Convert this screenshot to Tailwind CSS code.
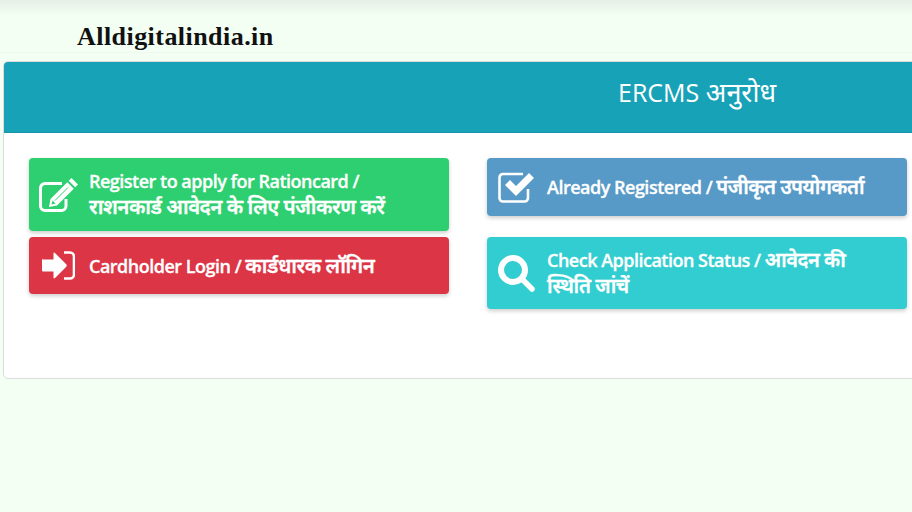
<!DOCTYPE html>
<html lang="hi">
<head>
    <meta charset="UTF-8">
    <title>ERCMS अनुरोध | Alldigitalindia.in</title>
    <script src="https://cdn.jsdelivr.net/npm/@tailwindcss/browser@4"></script>
</head>
<body class="bg-[#f3fff3] h-[512px] overflow-hidden font-['Open_Sans','Noto_Sans',sans-serif]">

    <!-- Top bar -->
    <header class="h-[53px] pl-[77px] pt-[22px] bg-gradient-to-b from-[#e6efe6] from-0% to-[#f3fff3] to-[30%] border-b border-[#eef8ee]">
        <h1 class="font-['Liberation_Serif',serif] font-bold text-[26px] leading-[30px] tracking-[0.45px] text-[#111]">Alldigitalindia.in</h1>
    </header>

    <!-- Card -->
    <section class="ml-[3px] mt-[8px] w-[1388px] h-[318px] bg-white border border-[#dcdcdc] rounded-[5px] overflow-hidden">
        <div class="h-[71px] bg-[#17a2b8] border-b border-[#1593a7] flex items-center justify-center">
            <h2 class="text-white text-[25px] leading-none -mt-[11px]">ERCMS <span class="text-[27px]">अनुरोध</span></h2>
        </div>

        <div class="pl-[25px] pt-[25px] flex gap-[38px]">
            <!-- Left column -->
            <div class="w-[420px] flex flex-col gap-[6px]">
                <a class="h-[73px] flex items-center gap-[10px] pl-[10px] rounded-[4px] bg-[#2ecf70] shadow-[0_2px_4px_rgba(0,0,0,0.2)] text-white font-semibold text-[18px] leading-[25px] tracking-[-0.5px] [-webkit-text-stroke:0.3px_white]">
                    <svg class="w-10 h-9 shrink-0" viewBox="0 0 40 36" fill="none">
                        <path d="M27 22v7a4.500 4.500 0 0 1-4.500 4.500H6A4.500 4.500 0 0 1 1.500 29V11A4.500 4.500 0 0 1 6 6.500h17" stroke="white" stroke-width="3"/>
                        <path d="M32.500 1l6.500 6.500-2.800 2.800-6.500-6.500zM28.300 5.200l6.500 6.500L18 28.500l-8 1.500 1.500-8z" fill="white"/>
                        <path d="M29 10.500l-13 13" stroke="#2ecf70" stroke-width="1"/>
                        <path d="M13.500 23.500l-1 4 4-1z" fill="#2ecf70"/>
                    </svg>
                    <span>Register to apply for Rationcard /<br><span class="text-[20.4px]">राशनकार्ड आवेदन के लिए पंजीकरण करें</span></span>
                </a>
                <a class="h-[57px] flex items-center gap-[14px] pl-[13px] rounded-[4px] bg-[#dc3545] shadow-[0_2px_4px_rgba(0,0,0,0.2)] text-white font-semibold text-[18px] leading-[25px] tracking-[-0.5px] [-webkit-text-stroke:0.3px_white]">
                    <svg class="w-[33px] h-[29px] shrink-0" viewBox="0 0 33 29" fill="none">
                        <path d="M1 8.500h10.500V2.500q0-1.500 1.500-.500L24 13q1.500 1.500 0 3L13 27q-1.500 1-1.500-.500v-6H1q-1 0-1-1v-10q0-1 1-2z" fill="white"/>
                        <path d="M22 1.500h6a4 4 0 0 1 4 4v18a4 4 0 0 1-4 4h-6" stroke="white" stroke-width="2.600"/>
                    </svg>
                    <span>Cardholder Login / <span class="text-[20.4px]">कार्डधारक लॉगिन</span></span>
                </a>
            </div>

            <!-- Right column -->
            <div class="w-[420px] flex flex-col gap-[21px]">
                <a class="h-[58px] flex items-center gap-[12px] pl-[11px] rounded-[4px] bg-[#5799c7] shadow-[0_2px_4px_rgba(0,0,0,0.2)] text-white font-semibold text-[18px] leading-[25px] tracking-[-0.5px] [-webkit-text-stroke:0.3px_white]">
                    <svg class="w-[37px] h-[31px] shrink-0" viewBox="0 0 37 31" fill="none">
                        <path d="M30 17v9a3.500 3.500 0 0 1-3.500 3.500H5A3.500 3.500 0 0 1 1.500 26V5.500A3.500 3.500 0 0 1 5 2h20" stroke="white" stroke-width="2.600"/>
                        <path d="M7 13l5-5 6 6L31 1l5 5-18 18z" fill="white"/>
                    </svg>
                    <span>Already Registered / <span class="text-[20px]">पंजीकृत उपयोगकर्ता</span></span>
                </a>
                <a class="h-[72px] flex items-center gap-[12px] pl-[11px] rounded-[4px] bg-[#32cdd0] shadow-[0_2px_4px_rgba(0,0,0,0.2)] text-white font-semibold text-[18px] leading-[25px] tracking-[-0.5px] [-webkit-text-stroke:0.3px_white]">
                    <svg class="w-[37px] h-[37px] shrink-0" viewBox="0 0 37 37" fill="none">
                        <circle cx="15" cy="15" r="12" stroke="white" stroke-width="6"/>
                        <path d="M24 24l10 10" stroke="white" stroke-width="5.500" stroke-linecap="round"/>
                    </svg>
                    <span>Check Application Status / <span class="text-[20px]">आवेदन की<br>स्थिति जांचें</span></span>
                </a>
            </div>
        </div>
    </section>

</body>
</html>
